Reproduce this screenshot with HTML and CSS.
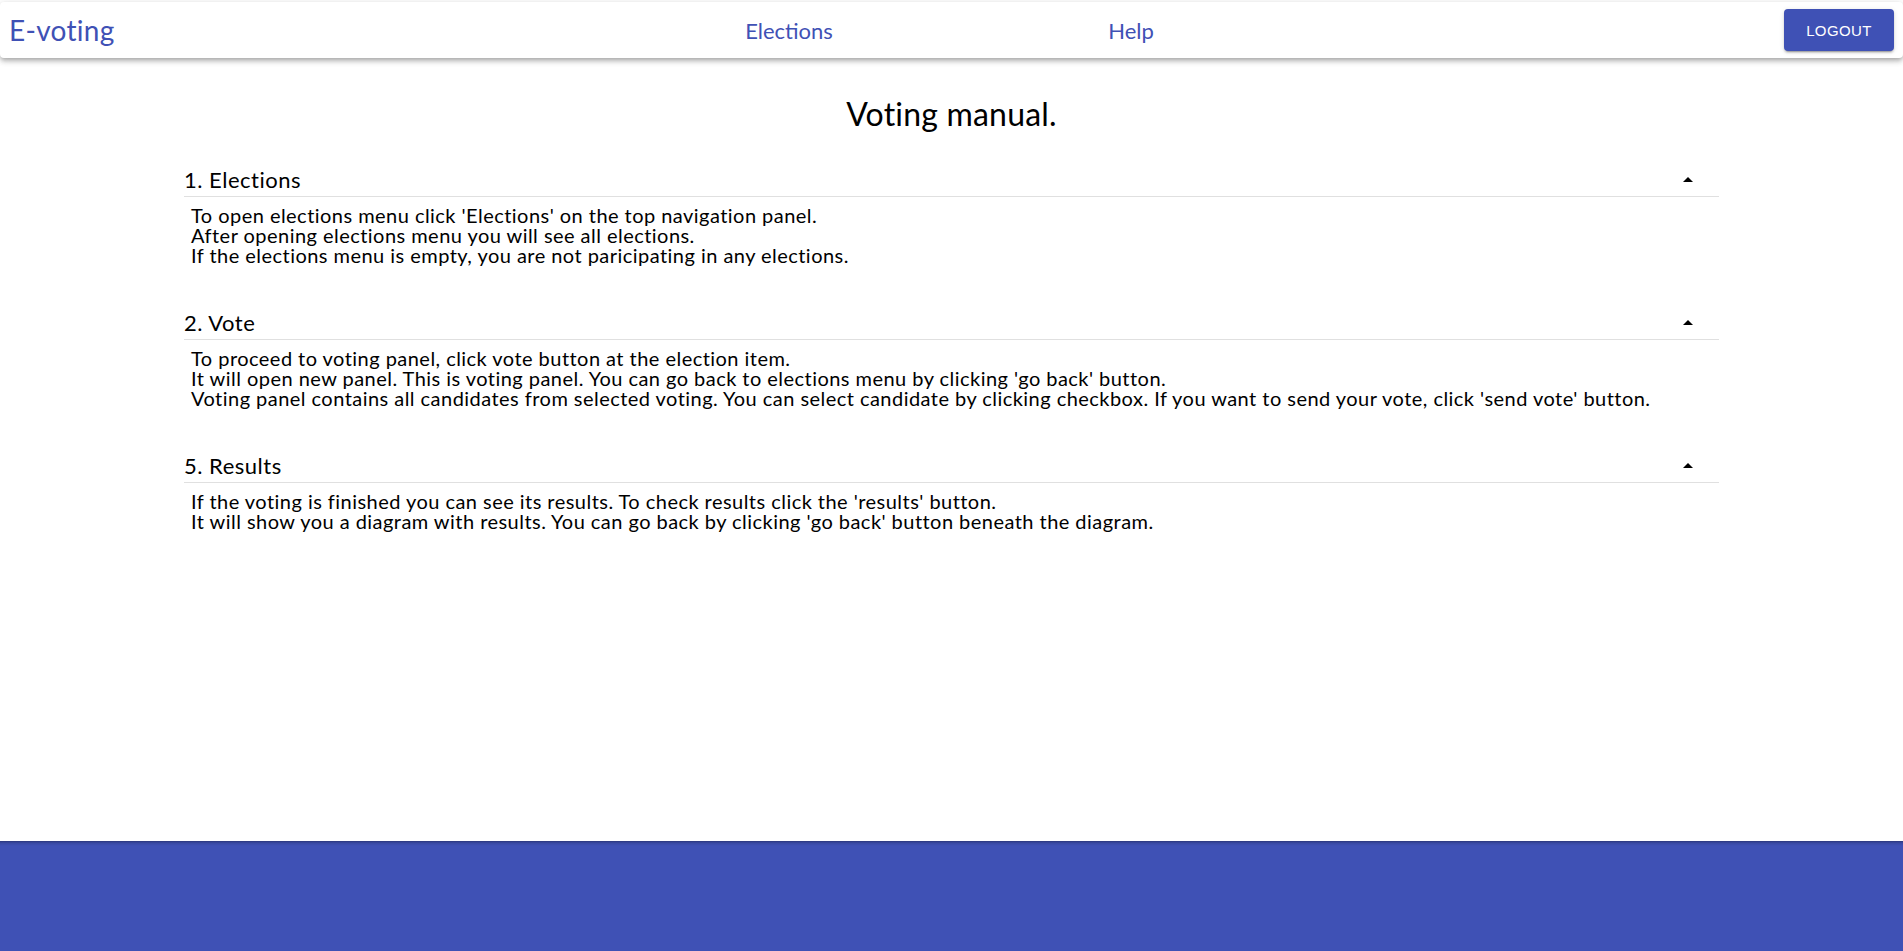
FILE: index.html
```html
<!DOCTYPE html>
<html lang="en">
<head>
<meta charset="utf-8">
<title>E-voting</title>
<link rel="stylesheet" href="styles.css">
</head>
<body>
<header class="appbar">
  <div class="brand">E-voting</div>
  <nav class="nav">
    <a class="nav-link" href="#">Elections</a>
    <a class="nav-link" href="#">Help</a>
  </nav>
  <div class="actions"><button class="logout" type="button">LOGOUT</button></div>
</header>
<main class="manual">
  <h1 class="title">Voting manual.</h1>
  <section class="panel">
    <div class="panel-head">
      <h2 class="panel-title">1. Elections</h2>
      <svg class="caret" width="10" height="5" viewBox="0 0 10 5"><path d="M0 5 L5 0 L10 5 Z"/></svg>
    </div>
    <div class="panel-body">
      <p>To open elections menu click 'Elections' on the top navigation panel.</p>
      <p>After opening elections menu you will see all elections.</p>
      <p>If the elections menu is empty, you are not paricipating in any elections.</p>
    </div>
  </section>
  <section class="panel">
    <div class="panel-head">
      <h2 class="panel-title">2. Vote</h2>
      <svg class="caret" width="10" height="5" viewBox="0 0 10 5"><path d="M0 5 L5 0 L10 5 Z"/></svg>
    </div>
    <div class="panel-body">
      <p>To proceed to voting panel, click vote button at the election item.</p>
      <p>It will open new panel. This is voting panel. You can go back to elections menu by clicking 'go back' button.</p>
      <p>Voting panel contains all candidates from selected voting. You can select candidate by clicking checkbox. If you want to send your vote, click 'send vote' button.</p>
    </div>
  </section>
  <section class="panel">
    <div class="panel-head">
      <h2 class="panel-title">5. Results</h2>
      <svg class="caret" width="10" height="5" viewBox="0 0 10 5"><path d="M0 5 L5 0 L10 5 Z"/></svg>
    </div>
    <div class="panel-body">
      <p>If the voting is finished you can see its results. To check results click the 'results' button.</p>
      <p>It will show you a diagram with results. You can go back by clicking 'go back' button beneath the diagram.</p>
    </div>
  </section>
</main>
<footer class="footer"></footer>
</body>
</html>
```

FILE: styles.css
```css
* { box-sizing: border-box; }

html, body { margin: 0; padding: 0; }

body {
  min-height: 100vh;
  display: flex;
  flex-direction: column;
  background: #fff;
  color: #000;
  font-family: Lato, "Noto Sans", sans-serif;
}

.appbar {
  margin-top: 2px;
  height: 56px;
  display: grid;
  grid-template-columns: 1fr 701px 1fr;
  align-items: center;
  background: #fff;
  border-radius: 4px;
  box-shadow: 0 2px 4px -1px rgba(0,0,0,0.2), 0 4px 5px 0 rgba(0,0,0,0.14), 0 1px 10px 0 rgba(0,0,0,0.12);
  position: relative;
  z-index: 1;
}

.brand {
  padding-left: 9px;
  font-size: 28px;
  letter-spacing: 0.3px;
  color: #3f51b5;
  line-height: 1;
}

.nav {
  display: grid;
  grid-template-columns: 342px 342px;
  padding-left: 17px;
}

.nav-link {
  text-align: center;
  font-size: 22px;
  color: #3f51b5;
  text-decoration: none;
}

.actions {
  display: flex;
  justify-content: flex-end;
  padding-right: 9px;
}

.logout {
  width: 110px;
  height: 42px;
  border: 0;
  border-radius: 4px;
  background: #3f51b5;
  color: #fff;
  font-family: "Liberation Sans", Arial, sans-serif;
  font-size: 15px;
  letter-spacing: 0.4px;
  box-shadow: 0 3px 1px -2px rgba(0,0,0,0.2), 0 2px 2px 0 rgba(0,0,0,0.14), 0 1px 5px 0 rgba(0,0,0,0.12);
}

.manual {
  flex: 1;
  padding: 0 184px;
}

.title {
  margin: 36px 0 35px;
  text-align: center;
  font-size: 32px;
  line-height: 40px;
  letter-spacing: 0.2px;
  font-weight: 400;
}

.panel { margin-bottom: 47px; }

.panel-head {
  display: flex;
  align-items: center;
  justify-content: space-between;
  padding-bottom: 5px;
  border-bottom: 1px solid #e0e0e0;
}

.panel-title {
  margin: 0;
  font-size: 22px;
  line-height: 22px;
  letter-spacing: 0.5px;
  font-weight: 400;
}

.caret {
  margin-right: 26px;
  margin-top: -2px;
  fill: #000;
}

.panel-body {
  padding: 8px 0 0 7px;
  font-size: 20px;
  line-height: 20px;
  letter-spacing: 0.46px;
}

.panel-body p { margin: 0; }

.footer {
  height: 110px;
  background: linear-gradient(to bottom, rgba(0,0,0,0.32) 0, rgba(0,0,0,0.1) 2px, rgba(0,0,0,0) 5px), #3f51b5;
}
```
